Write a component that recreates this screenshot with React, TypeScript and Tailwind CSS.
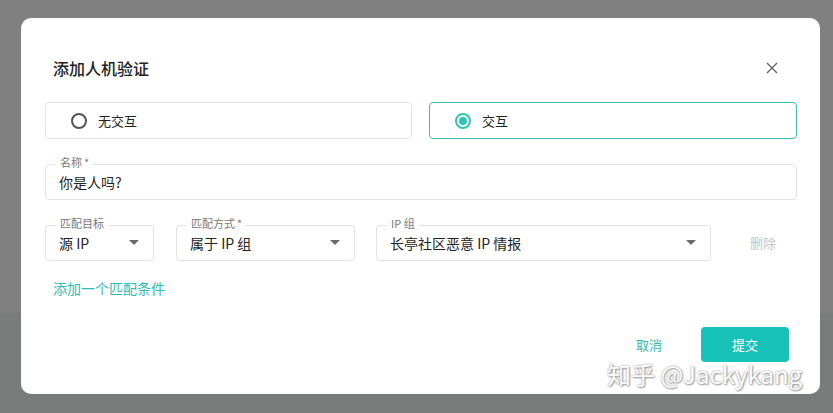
import React from "react";

const font = { fontFamily: '"Noto Sans CJK SC", "Noto Sans", sans-serif' };

const Arrow = () => (
    <svg width="10" height="6" viewBox="0 0 10 6" className="shrink-0">
        <path d="M0 0 L10 0 L5 5 Z" fill="#6b6b6b" />
    </svg>
);

interface FieldProps {
    label: string;
    required?: boolean;
    value: string;
    select?: boolean;
    className?: string;
}

const Field = ({ label, required, value, select, className }: FieldProps) => (
    <div
        className={`relative h-[36px] border border-[#e3e3e3] rounded-[4px] flex items-center pl-[13px] pr-[14px] ${className ?? ""}`}
    >
        <span className="absolute left-[10px] -top-[10px] bg-white px-[4px] text-[11px] leading-[14px] text-[#777]">
            {label}
            {required && <span className="ml-[2px]">*</span>}
        </span>
        <span className="flex-1 text-[14px] text-[#222] whitespace-nowrap">{value}</span>
        {select && <Arrow />}
    </div>
);

const Radio = ({ checked, label }: { checked?: boolean; label: string }) => (
    <div
        className={`h-[37px] rounded-[4px] flex items-center pl-[25px] gap-[11px] ${
            checked ? "border border-[#3cbfae]" : "border border-[#e6e6e6]"
        }`}
    >
        {checked ? (
            <span className="w-[16px] h-[16px] rounded-full border-2 border-[#2ec4b6] flex items-center justify-center">
                <span className="w-[8px] h-[8px] rounded-full bg-[#2ec4b6]" />
            </span>
        ) : (
            <span className="w-[16px] h-[16px] rounded-full border-2 border-[#555]" />
        )}
        <span className="text-[13px] text-[#222]">{label}</span>
    </div>
);

export default function App() {
    return (
        <div className="relative w-[833px] h-[413px] overflow-hidden" style={font}>
            <div className="flex flex-col h-full">
                <div className="h-[313px] bg-[#808080]" />
                <div className="flex-1 bg-[#7a7c7c]" />
            </div>

            <div className="absolute left-[21px] top-[18px] w-[799px] h-[376px] bg-white rounded-[10px] px-[24px] pt-[38px] flex flex-col">
                <div className="flex items-center justify-between pl-[8px] pr-[18px] h-[24px]">
                    <span className="text-[16px] font-medium text-[#222]">添加人机验证</span>
                    <svg width="12" height="12" viewBox="0 0 12 12">
                        <path d="M1 1 L11 11 M11 1 L1 11" stroke="#666" strokeWidth="1.4" />
                    </svg>
                </div>

                <div className="grid grid-cols-[367px_368px] gap-[17px] mt-[22px]">
                    <Radio label="无交互" />
                    <Radio checked label="交互" />
                </div>

                <Field label="名称" required value="你是人吗?" className="mt-[25px] w-[752px]" />

                <div className="flex items-center mt-[25px]">
                    <Field label="匹配目标" value="源 IP" select className="w-[109px]" />
                    <Field label="匹配方式" required value="属于 IP 组" select className="w-[179px] ml-[22px]" />
                    <Field label="IP 组" value="长亭社区恶意 IP 情报" select className="w-[335px] ml-[21px]" />
                    <span className="ml-[39px] text-[13px] text-[#c4c4c4]">删除</span>
                </div>

                <div className="mt-[17px] pl-[8px] text-[14px] leading-[20px] text-[#2cbdb3]">添加一个匹配条件</div>

                <div className="flex items-center justify-end mt-[29px] pr-[7px]">
                    <span className="text-[13px] text-[#2cbdb3] mr-[39px]">取消</span>
                    <span className="w-[88px] h-[35px] rounded-[4px] bg-[#17c3b9] text-white text-[13px] flex items-center justify-center">
                        提交
                    </span>
                </div>
            </div>

            <div
                className="absolute left-[607px] top-[358px] text-[24px] leading-[32px] text-white whitespace-nowrap"
                style={{ textShadow: "0 0 2px #888, 1px 1px 2px #999" }}
            >
                知乎 @Jackykang
            </div>
        </div>
    );
}
